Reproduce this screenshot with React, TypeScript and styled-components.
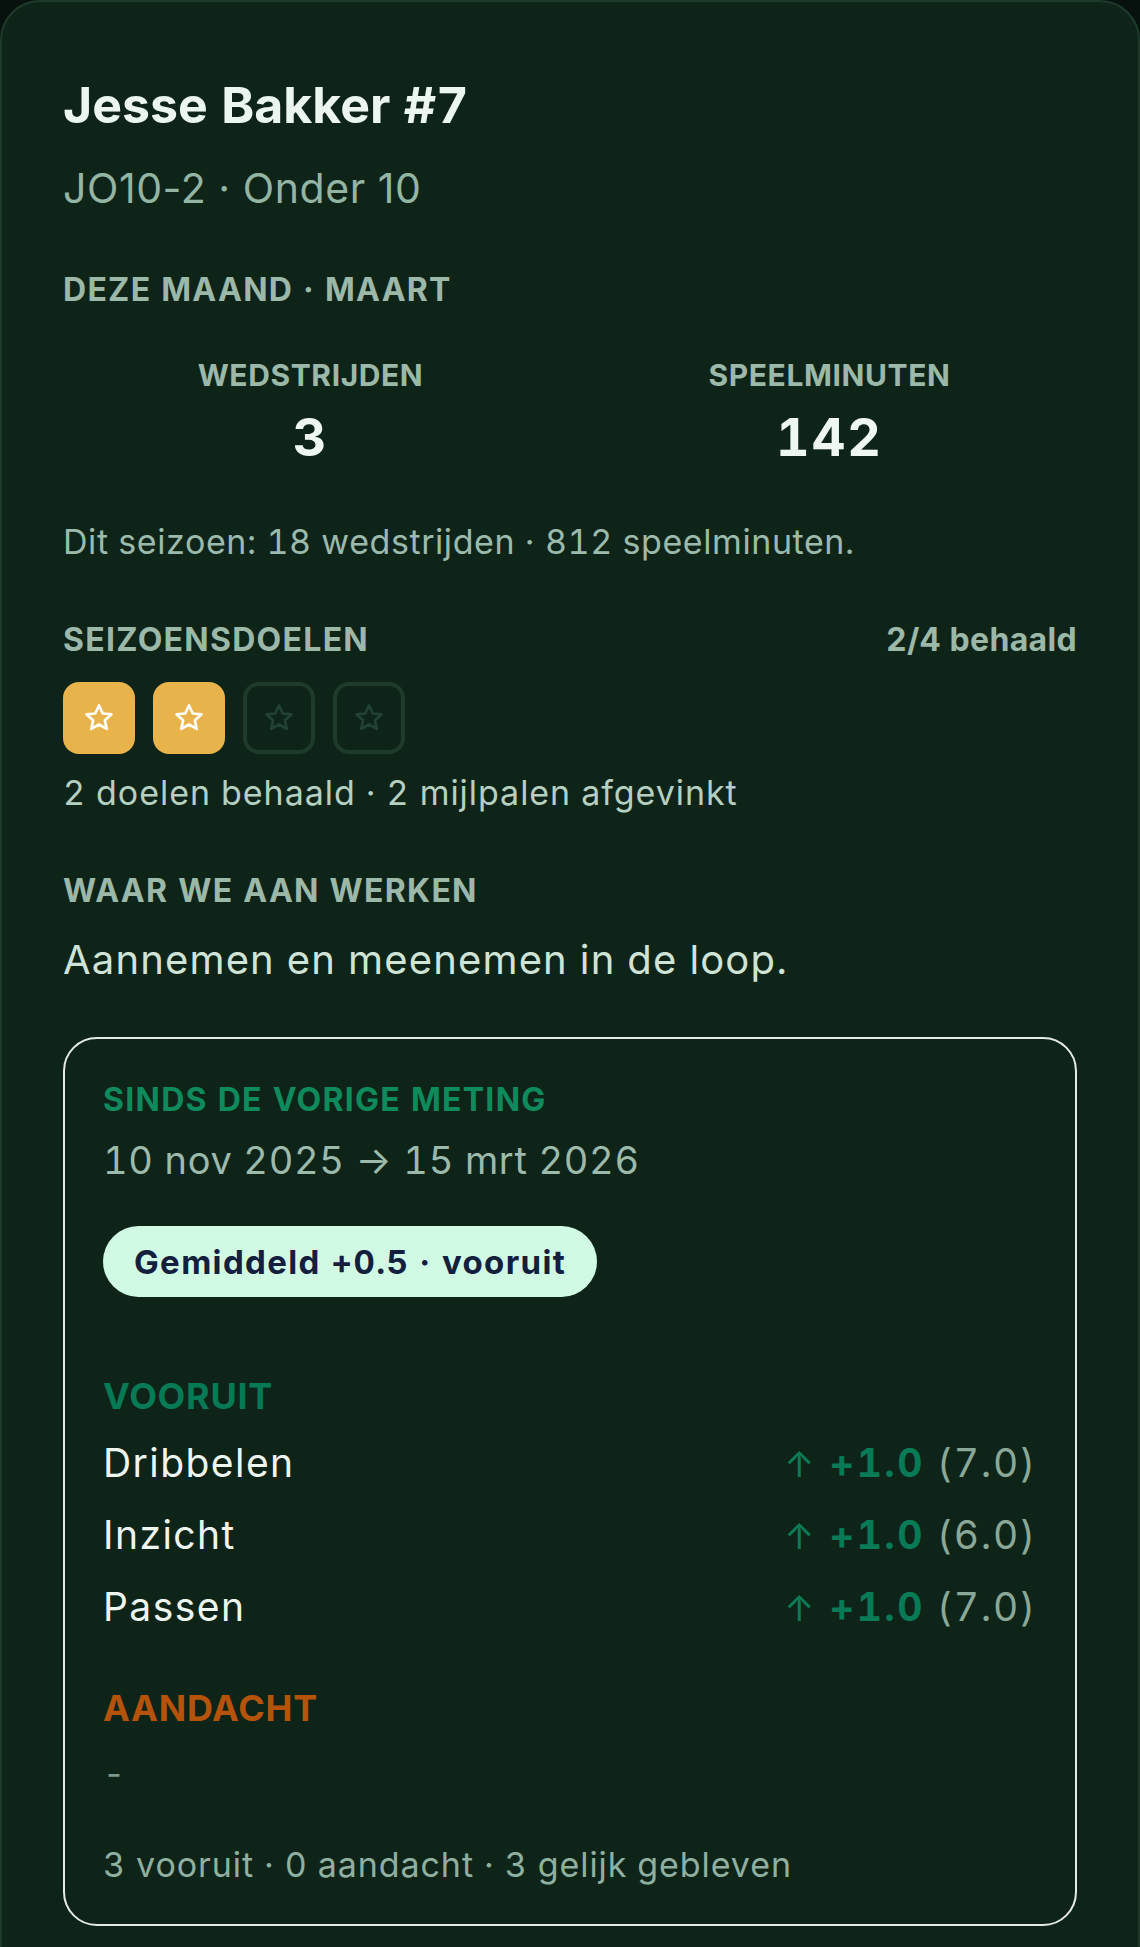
import React from 'react';
import styled, { createGlobalStyle } from 'styled-components';

const GlobalStyle = createGlobalStyle`
  html, body {
    margin: 0;
    padding: 0;
    background: #07120e;
  }
  body {
    font-family: Inter, "Noto Sans", "Liberation Sans", sans-serif;
    font-variant-numeric: tabular-nums;
    -webkit-font-smoothing: antialiased;
  }
  * { box-sizing: border-box; }
`;

const Card = styled.section`
  width: 1140px;
  background: #0f2419;
  border: 2px solid #1e3a2b;
  border-radius: 40px;
  padding: 73px 61px 80px 61px;
`;

const Title = styled.h1`
  margin: 0;
  font-size: 50px;
  line-height: 60px;
  font-weight: 700;
  color: #eaf6ee;
`;

const Subtitle = styled.p`
  margin: 29px 0 0 0;
  font-size: 41px;
  line-height: 48px;
  letter-spacing: 0.014em;
  font-variant-numeric: normal;
  color: #94b4a4;
`;

const SectionLabel = styled.h2<{ $mt?: number }>`
  margin: ${p => p.$mt ?? 0}px 0 0 0;
  font-size: 32px;
  line-height: 40px;
  font-weight: 700;
  letter-spacing: 0.04em;
  text-transform: uppercase;
  color: #9bb8a8;
`;

const StatsGrid = styled.div`
  display: grid;
  grid-template-columns: 1fr 1fr;
  gap: 24px;
  margin-top: 45px;
`;

const Stat = styled.div`
  display: flex;
  flex-direction: column;
  align-items: center;
`;

const StatLabel = styled.span`
  font-size: 30px;
  line-height: 40px;
  font-weight: 700;
  letter-spacing: 0.02em;
  color: #9bb8a8;
`;

const StatValue = styled.span`
  margin-top: 13px;
  font-size: 52px;
  line-height: 60px;
  font-weight: 700;
  letter-spacing: 0.04em;
  color: #eef7f1;
`;

const BodyText = styled.p<{ $mt: number; $light?: boolean; $ls: number }>`
  margin: ${p => p.$mt}px 0 0 0;
  font-size: 34px;
  line-height: 44px;
  letter-spacing: ${p => p.$ls}em;
  color: ${p => (p.$light ? '#b5cfc1' : '#9cbaab')};
`;

const HeaderRow = styled.div`
  display: flex;
  justify-content: space-between;
  align-items: baseline;
  margin-top: 56px;
`;

const Count = styled.span`
  font-size: 32px;
  line-height: 40px;
  font-weight: 700;
  letter-spacing: 0.01em;
  color: #9bb8a8;
`;

const Tiles = styled.div`
  display: flex;
  gap: 18px;
  margin-top: 22px;
`;

const Tile = styled.div<{ $done: boolean }>`
  width: 72px;
  height: 72px;
  border-radius: 16px;
  display: flex;
  align-items: center;
  justify-content: center;
  background: ${p => (p.$done ? '#e8b34b' : 'transparent')};
  border: ${p => (p.$done ? 'none' : '4px solid #1e3a2b')};
  color: ${p => (p.$done ? '#ffffff' : '#224334')};
`;

const FocusText = styled.p`
  margin: 24px 0 0 0;
  font-size: 40px;
  line-height: 50px;
  letter-spacing: 0.029em;
  color: #cfe3d7;
`;

const ProgressBox = styled.div`
  margin-top: 52px;
  border: 2px solid #e4ebe7;
  border-radius: 34px;
  padding: 41px 38px 37px 38px;
`;

const BoxLabel = styled.h3`
  margin: 0;
  font-size: 32px;
  line-height: 40px;
  font-weight: 700;
  letter-spacing: 0.04em;
  text-transform: uppercase;
  color: #0e8a5c;
`;

const DateRange = styled.p`
  margin: 16px 0 0 0;
  font-size: 38px;
  line-height: 48px;
  letter-spacing: 0.018em;
  color: #9cbaab;
`;

const Pill = styled.span`
  display: inline-flex;
  align-items: center;
  margin-top: 42px;
  height: 71px;
  padding: 0 31px;
  border-radius: 36px;
  background: #d1fae5;
  color: #12203d;
  font-size: 33px;
  font-weight: 700;
  letter-spacing: 0.041em;
`;

const PillWrap = styled.div`
  display: flex;
`;

const GroupLabel = styled.h4<{ $tone: 'up' | 'down'; $mt: number }>`
  margin: ${p => p.$mt}px 0 0 0;
  font-size: 36px;
  line-height: 44px;
  font-weight: 700;
  letter-spacing: 0.02em;
  text-transform: uppercase;
  color: ${p => (p.$tone === 'up' ? '#067a55' : '#b45309')};
`;

const SkillList = styled.div`
  margin-top: 9px;
  display: flex;
  flex-direction: column;
`;

const SkillRow = styled.div`
  display: flex;
  justify-content: space-between;
  align-items: baseline;
  height: 72px;
  line-height: 72px;
  font-size: 39px;
`;

const SkillName = styled.span`
  letter-spacing: 0.037em;
  color: #eef6f0;
`;

const Delta = styled.span`
  display: flex;
  align-items: baseline;
  gap: 12px;
`;

const Arrow = styled.span`
  color: #0a7d57;
  font-size: 36px;
  margin-right: 3px;
`;

const Change = styled.span`
  color: #087a55;
  font-weight: 700;
  letter-spacing: 0.06em;
`;

const Score = styled.span`
  color: #8aa898;
  letter-spacing: 0.045em;
`;

const Empty = styled.p`
  margin: 22px 0 0 0;
  font-size: 34px;
  line-height: 44px;
  color: #7d978a;
`;

const Summary = styled.p`
  margin: 47px 0 0 0;
  font-size: 34px;
  line-height: 44px;
  letter-spacing: 0.027em;
  color: #8fb0a0;
`;

const StarIcon = () => (
  <svg width="32" height="32" viewBox="0 0 24 24" fill="none" stroke="currentColor" strokeWidth="2" strokeLinejoin="round">
    <polygon points="12,2.6 14.8,8.6 21.3,9.3 16.4,13.7 17.8,20.2 12,16.9 6.2,20.2 7.6,13.7 2.7,9.3 9.2,8.6" />
  </svg>
);

const goals = [true, true, false, false];

const skills = [
  { name: 'Dribbelen', change: '+1.0', score: '(7.0)' },
  { name: 'Inzicht', change: '+1.0', score: '(6.0)' },
  { name: 'Passen', change: '+1.0', score: '(7.0)' },
];

export default function App() {
  return (
    <>
      <GlobalStyle />
      <Card>
        <Title>Jesse Bakker #7</Title>
        <Subtitle>JO10-2 · Onder 10</Subtitle>

        <SectionLabel $mt={58}>Deze maand · Maart</SectionLabel>
        <StatsGrid>
          <Stat>
            <StatLabel>WEDSTRIJDEN</StatLabel>
            <StatValue>3</StatValue>
          </Stat>
          <Stat>
            <StatLabel>SPEELMINUTEN</StatLabel>
            <StatValue>142</StatValue>
          </Stat>
        </StatsGrid>
        <BodyText $mt={52} $ls={0.017}>Dit seizoen: 18 wedstrijden · 812 speelminuten.</BodyText>

        <HeaderRow>
          <SectionLabel>Seizoensdoelen</SectionLabel>
          <Count>2/4 behaald</Count>
        </HeaderRow>
        <Tiles>
          {goals.map((done, i) => (
            <Tile key={i} $done={done}>
              <StarIcon />
            </Tile>
          ))}
        </Tiles>
        <BodyText $mt={17} $ls={0.028} $light>2 doelen behaald · 2 mijlpalen afgevinkt</BodyText>

        <SectionLabel $mt={56}>Waar we aan werken</SectionLabel>
        <FocusText>Aannemen en meenemen in de loop.</FocusText>

        <ProgressBox>
          <BoxLabel>Sinds de vorige meting</BoxLabel>
          <DateRange>10 nov 2025 → 15 mrt 2026</DateRange>
          <PillWrap>
            <Pill>Gemiddeld +0.5 · vooruit</Pill>
          </PillWrap>

          <GroupLabel $tone="up" $mt={77}>Vooruit</GroupLabel>
          <SkillList>
            {skills.map(s => (
              <SkillRow key={s.name}>
                <SkillName>{s.name}</SkillName>
                <Delta>
                  <Arrow>↑</Arrow>
                  <Change>{s.change}</Change>
                  <Score>{s.score}</Score>
                </Delta>
              </SkillRow>
            ))}
          </SkillList>

          <GroupLabel $tone="down" $mt={43}>Aandacht</GroupLabel>
          <Empty>-</Empty>
          <Summary>3 vooruit · 0 aandacht · 3 gelijk gebleven</Summary>
        </ProgressBox>
      </Card>
    </>
  );
}
